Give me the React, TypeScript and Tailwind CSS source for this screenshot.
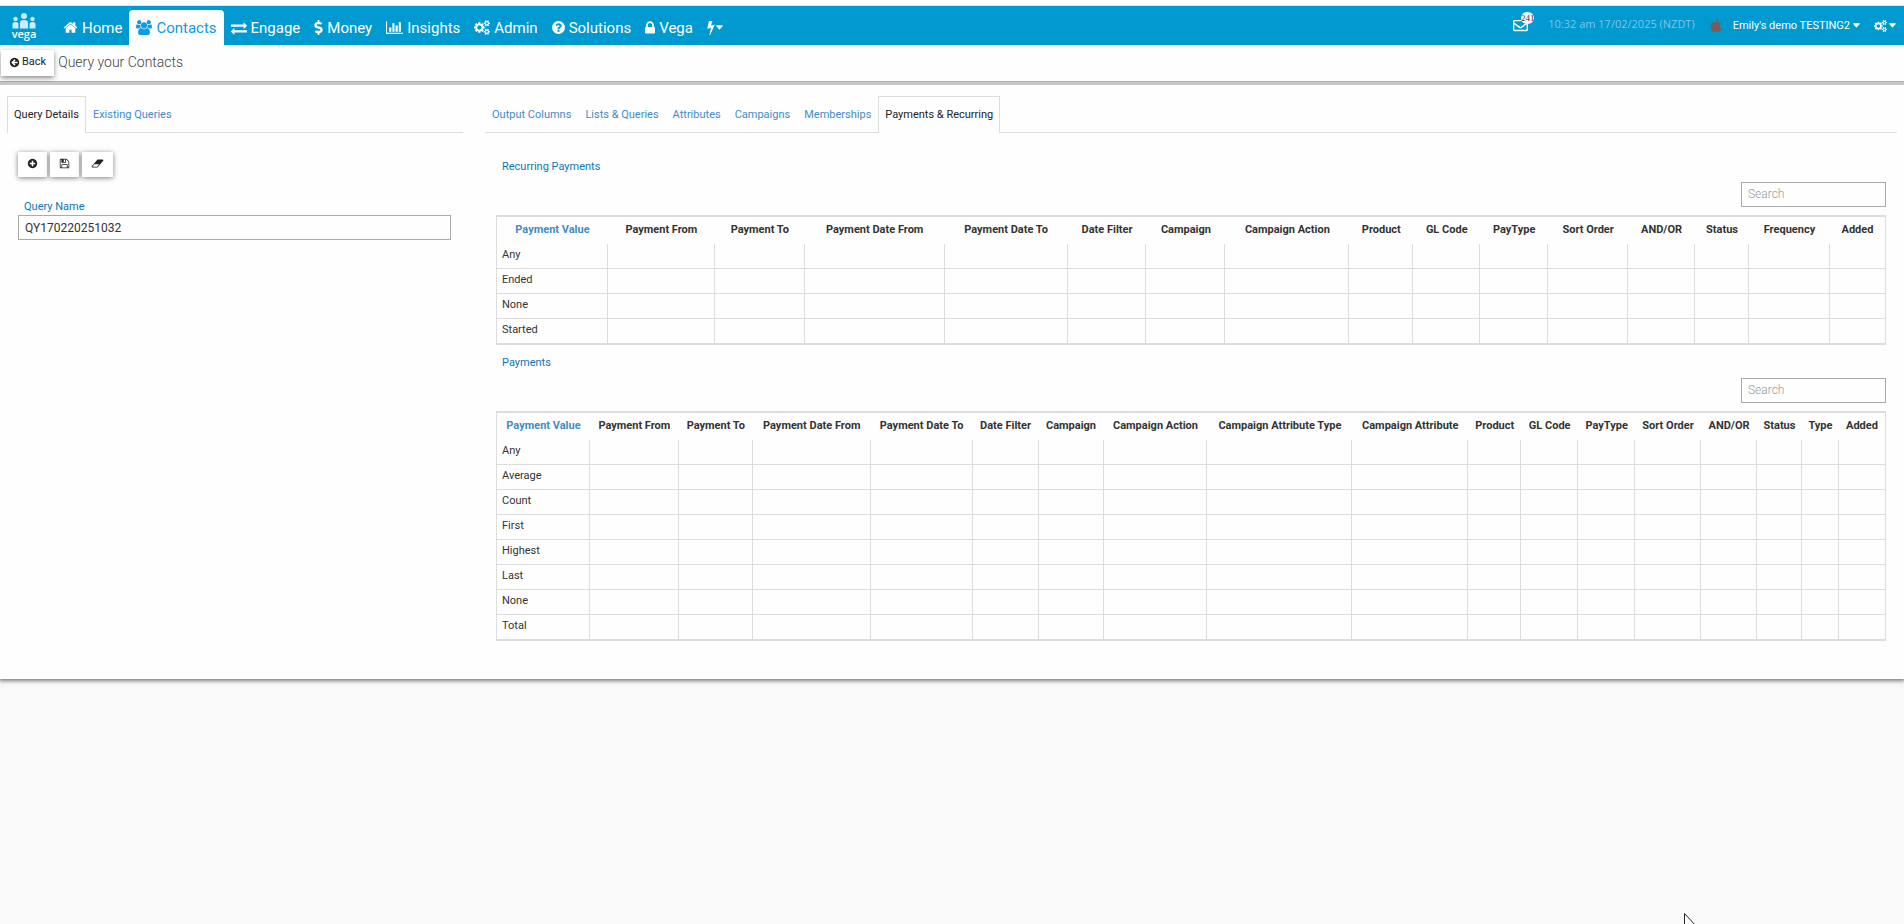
import { useState } from 'react';
import { FaApple, FaDollarSign, FaRegEnvelope } from 'react-icons/fa';

// [viewBox, path]
const ICONS = {
  home: [
    '0 0 1792 1792',
    'M1472 992v480q0 26-19 45t-45 19h-384v-384h-256v384h-384q-26 0-45-19t-19-45v-480q0-1 .5-3t.5-3l575-474 575 474q1 2 1 6zm223-69l-62 74q-8 9-21 11h-3q-13 0-21-7l-692-577-692 577q-12 8-24 7-13-2-21-11l-62-74q-8-10-7-23.500t11-21.500l719-599q32-26 76-26t76 26l244 204v-195q0-14 9-23t23-9h192q14 0 23 9t9 23v408l219 182q10 8 11 21.500t-7 23.500z',
  ],
  users: [
    '64 0 1920 1792',
    'M657 896q-162 5-265 128h-134q-82 0-138-40.500t-56-118.500q0-353 124-353 6 0 43.500 21t97.500 42.500 119 21.500q67 0 133-23-5 37-5 66 0 139 81 256zm1071 637q0 120-73 189.500t-194 69.500h-874q-121 0-194-69.500t-73-189.500q0-53 3.500-103.500t14-109 26.500-108.500 43-97.500 62-81 85.500-53.500 111.500-20q10 0 43 21.500t73 48 107 48 135 21.500 135-21.500 107-48 73-48 43-21.500q61 0 111.500 20t85.500 53.500 62 81 43 97.500 26.500 108.500 14 109 3.500 103.500zm-1024-1277q0 106-75 181t-181 75-181-75-75-181 75-181 181-75 181 75 75 181zm704 384q0 159-112.500 271.500t-271.500 112.500-271.500-112.500-112.500-271.500 112.500-271.500 271.500-112.500 271.500 112.500 112.500 271.500zm576 225q0 78-56 118.500t-138 40.500h-134q-103-123-265-128 81-117 81-256 0-29-5-66 66 23 133 23 59 0 119-21.500t97.500-42.500 43.500-21q124 0 124 353zm-128-609q0 106-75 181t-181 75-181-75-75-181 75-181 181-75 181 75 75 181z',
  ],
  exchange: [
    '0 0 1792 1792',
    'M1792 1184v192q0 13-9.500 22.500t-22.500 9.500h-1376v192q0 13-9.500 22.500t-22.500 9.500q-12 0-24-10l-319-320q-9-9-9-22 0-14 9-23l320-320q9-9 23-9 13 0 22.500 9.500t9.500 22.500v192h1376q13 0 22.500 9.500t9.500 22.500zm0-544q0 14-9 23l-320 320q-9 9-23 9-13 0-22.500-9.500t-9.500-22.500v-192h-1376q-13 0-22.500-9.500t-9.500-22.500v-192q0-13 9.500-22.500t22.500-9.500h1376v-192q0-14 9-23t23-9q12 0 24 10l319 319q9 9 9 23z',
  ],
  chart: [
    '0 0 2048 1792',
    'M640 896v512h-256v-512h256zm384-512v1024h-256v-1024h256zm1024 1152v128h-2048v-1536h128v1408h1920zm-640-896v768h-256v-768h256zm384-384v1152h-256v-1152h256z',
  ],
  cogs: [
    '0 0 1920 1792',
    'M896 896q0-106-75-181t-181-75-181 75-75 181 75 181 181 75 181-75 75-181zm768 512q0-52-38-90t-90-38-90 38-38 90q0 53 37.500 90.500t90.500 37.500 90.500-37.500 37.500-90.500zm0-1024q0-52-38-90t-90-38-90 38-38 90q0 53 37.500 90.500t90.500 37.500 90.500-37.500 37.500-90.500zm-384 421v185q0 10-7 19.500t-16 10.500l-155 24q-11 35-32 76 34 48 90 115 7 11 7 20 0 12-7 19-23 30-82.500 89.500t-78.500 59.500q-11 0-21-7l-115-90q-37 19-77 31-11 108-23 155-7 24-30 24h-186q-11 0-20-7.500t-10-17.500l-23-153q-34-10-75-31l-118 89q-7 7-20 7-11 0-21-8-144-133-144-160 0-9 7-19 10-14 41-53t47-61q-23-44-35-82l-152-24q-10-1-17-9.500t-7-19.500v-185q0-10 7-19.500t16-10.500l155-24q11-35 32-76-34-48-90-115-7-11-7-20 0-12 7-20 22-30 82-89t79-59q11 0 21 7l115 90q34-18 77-32 11-108 23-154 7-24 30-24h186q11 0 20 7.500t10 17.500l23 153q34 10 75 31l118-89q8-7 20-7 11 0 21 8 144 133 144 160 0 8-7 19-12 16-42 54t-45 60q23 48 34 82l152 23q10 2 17 10.500t7 19.500zm640 533v140q0 16-149 31-12 27-30 52 51 113 51 138 0 4-4 7-122 71-124 71-8 0-46-47t-52-68q-20 2-30 2t-30-2q-14 21-52 68t-46 47q-2 0-124-71-4-3-4-7 0-25 51-138-18-25-30-52-149-15-149-31v-140q0-16 149-31 13-29 30-52-51-113-51-138 0-4 4-7 4-2 35-20t59-34 30-16q8 0 46 46.500t52 67.500q20-2 30-2t30 2q51-71 92-112l6-2q4 0 124 70 4 3 4 7 0 25-51 138 17 23 30 52 149 15 149 31zm0-1024v140q0 16-149 31-12 27-30 52 51 113 51 138 0 4-4 7-122 71-124 71-8 0-46-47t-52-68q-20 2-30 2t-30-2q-14 21-52 68t-46 47q-2 0-124-71-4-3-4-7 0-25 51-138-18-25-30-52-149-15-149-31v-140q0-16 149-31 13-29 30-52-51-113-51-138 0-4 4-7 4-2 35-20t59-34 30-16q8 0 46 46.500t52 67.500q20-2 30-2t30 2q51-71 92-112l6-2q4 0 124 70 4 3 4 7 0 25-51 138 17 23 30 52 149 15 149 31z',
  ],
  question: [
    '128 0 1536 1792',
    'M1024 1376v-192q0-14-9-23t-23-9h-192q-14 0-23 9t-9 23v192q0 14 9 23t23 9h192q14 0 23-9t9-23zm256-672q0-88-55.500-163t-138.500-116-170-41q-243 0-371 213-15 24 8 42l132 100q7 6 19 6 16 0 25-12 53-68 86-92 34-24 86-24 48 0 85.500 26t37.500 59q0 38-20 61t-68 45q-63 28-115.500 86.500t-52.500 125.500v36q0 14 9 23t23 9h192q14 0 23-9t9-23q0-19 21.500-49.500t54.500-49.500q32-18 49-28.500t46-35 44.500-48 28-60.500 12.500-81zm384 192q0 209-103 385.500t-279.500 279.500-385.500 103-385.500-103-279.500-279.500-103-385.500 103-385.500 279.500-279.500 385.500-103 385.500 103 279.500 279.500 103 385.500z',
  ],
  lock: [
    '320 0 1152 1792',
    'M640 768h512v-192q0-106-75-181t-181-75-181 75-75 181v192zm832 96v576q0 40-28 68t-68 28h-960q-40 0-68-28t-28-68v-576q0-40 28-68t68-28h32v-192q0-184 132-316t316-132 316 132 132 316v192h32q40 0 68 28t28 68z',
  ],
  bolt: [
    '448 0 896 1792',
    'M1333 566q18 20 7 44l-540 1157q-13 25-42 25-4 0-14-2-17-5-25.500-19t-4.500-30l197-808-406 101q-4 1-12 1-18 0-31-11-18-15-13-39l201-825q4-14 16-23t28-9h328q19 0 32 12.500t13 29.500q0 8-5 18l-171 463 396-98q8-2 12-2 19 0 34 15z',
  ],
  save: [
    '0 0 1792 1792',
    'M512 1536h768v-384h-768v384zm896 0h128v-896q0-14-10-38.500t-20-34.500l-281-281q-10-10-34-20t-39-10v416q0 40-28 68t-68 28h-576q-40 0-68-28t-28-68v-416h-128v1280h128v-416q0-40 28-68t68-28h832q40 0 68 28t28 68v416zm-384-928v-320q0-13-9.500-22.500t-22.500-9.500h-192q-13 0-22.500 9.500t-9.500 22.500v320q0 13 9.500 22.500t22.500 9.500h192q13 0 22.500-9.500t9.500-22.500zm640 32v928q0 40-28 68t-68 28h-1344q-40 0-68-28t-28-68v-1344q0-40 28-68t68-28h928q40 0 88 20t76 48l280 280q28 28 48 76t20 88z',
  ],
  eraser: [
    '0 0 2048 1792',
    'M960 1408l336-384h-768l-336 384h768zm1013-1077q15 34 9.500 71.500t-30.500 65.500l-896 1024q-38 44-96 44h-768q-38 0-69.500-20.500t-47.500-54.500q-15-34-9.500-71.500t30.500-65.500l896-1024q38-44 96-44h768q38 0 69.500 20.500t47.500 54.500z',
  ],
  plus: [
    '0 0 1792 1792',
    'M1344 960v-128q0-26-19-45t-45-19h-256v-256q0-26-19-45t-45-19h-128q-26 0-45 19t-19 45v256h-256q-26 0-45 19t-19 45v128q0 26 19 45t45 19h256v256q0 26 19 45t45 19h128q26 0 45-19t19-45v-256h256q26 0 45-19t19-45zm320-64q0 209-103 385.500t-279.500 279.500-385.500 103-385.500-103-279.500-279.500-103-385.500 103-385.500 279.500-279.500 385.500-103 385.500 103 279.500 279.500 103 385.500z',
  ],
  back: [
    '0 0 1792 1792',
    'M1408 960v-128q0-26-19-45t-45-19h-502l189-189q19-19 19-45t-19-45l-91-91q-18-18-45-18t-45 18l-362 362-91 91q-18 18-18 45t18 45l91 91 362 362q18 18 45 18t45-18l91-91q18-18 18-45t-18-45l-189-189h502q26 0 45-19t19-45zm256-64q0 209-103 385.500t-279.500 279.500-385.500 103-385.500-103-279.500-279.500-103-385.500 103-385.500 279.500-279.500 385.500-103 385.500 103 279.500 279.500 103 385.500z',
  ],
} as const;

type IconName = keyof typeof ICONS;

function Icon({ name, className }: { name: IconName; className: string }) {
  const [viewBox, d] = ICONS[name];
  return (
    <svg viewBox={viewBox} fill="currentColor" className={className} aria-hidden="true">
      <path d={d} />
    </svg>
  );
}

function Caret() {
  return (
    <svg viewBox="0 0 8 5" fill="currentColor" className="w-[7px] h-[5px]" aria-hidden="true">
      <path d="M.5 0h7q.5.3.2.7L4.400 4.600q-.4.4-.8 0L.3.7Q0 .3.500 0z" />
    </svg>
  );
}

function Logo() {
  return (
    <a href="#" className="flex flex-col items-center w-6 ml-3 text-white">
      <svg viewBox="0 0 24 16" className="w-6 h-4" fill="#c9eefb" aria-hidden="true">
        <circle cx="12" cy="3" r="3" />
        <circle cx="3.500" cy="6" r="2.200" />
        <circle cx="20.500" cy="6" r="2.200" />
        <path d="M8 15.500V9.500q0-2.500 4-2.500t4 2.500v6z" />
        <path d="M.5 15.500v-4.500q0-2 3-2t3 2v4.500z" />
        <path d="M17.500 15.500v-4.500q0-2 3-2t3 2v4.500z" />
      </svg>
      <span className="font-['Open_Sans',sans-serif] font-semibold text-[11px] leading-[9px]">vega</span>
    </a>
  );
}

const NAV: { label: string; icon: IconName | 'dollar'; size: string }[] = [
  { label: 'Home', icon: 'home', size: 'w-[15px] h-[15px]' },
  { label: 'Contacts', icon: 'users', size: 'w-4 h-[15px]' },
  { label: 'Engage', icon: 'exchange', size: 'w-4 h-4' },
  { label: 'Money', icon: 'dollar', size: 'w-[9px] h-[15px]' },
  { label: 'Insights', icon: 'chart', size: 'w-[17px] h-[15px]' },
  { label: 'Admin', icon: 'cogs', size: 'w-4 h-[15px]' },
  { label: 'Solutions', icon: 'question', size: 'w-[13px] h-[15px]' },
  { label: 'Vega', icon: 'lock', size: 'w-2.5 h-4' },
];

function NavBar() {
  return (
    <header className="flex h-10 border-t border-[#cfe9f4] bg-[#0099d0] text-white">
      <div className="flex items-center">
        <Logo />
      </div>
      <nav className="flex items-end ml-5">
        {NAV.map(({ label, icon, size }) => (
          <a
            key={label}
            href="#"
            className={
              label === 'Contacts'
                ? 'flex items-center gap-1 h-[35px] px-[7px] rounded-t text-[15px] bg-[#fefefe] text-[#0c9be6]'
                : 'flex items-center gap-1 h-[35px] px-[7px] rounded-t text-[15px]'
            }
          >
            {icon === 'dollar' ? <FaDollarSign className={size} /> : <Icon name={icon} className={size} />}
            {label}
          </a>
        ))}
        <button type="button" aria-label="Quick actions" className="flex items-center gap-px h-[35px] px-[7px]">
          <Icon name="bolt" className="w-2 h-[15px]" />
          <Caret />
        </button>
      </nav>
      <div className="flex items-center ml-auto pr-2 text-[11px]">
        <a href="#" className="relative mr-5" aria-label="Messages">
          <FaRegEnvelope className="w-[15px] h-[15px]" />
          <span className="absolute -top-1.5 left-2 flex items-center justify-center w-[13px] h-3 rounded-full bg-[#f3f3f3] font-['Liberation_Serif',serif] text-[9px] text-[#444]">
            241
          </span>
        </a>
        <span className="mr-3.5 pb-1 font-['Open_Sans',sans-serif] text-[#7cc6ea]">10:32 am 17/02/2025 (NZDT)</span>
        <FaApple className="w-[14px] h-[15px] mr-2.5 text-[#7a5c5a]" />
        <button type="button" className="flex items-center gap-[3px] mr-3.5">
          Emily&apos;s demo TESTING2
          <Caret />
        </button>
        <button type="button" aria-label="Settings" className="flex items-center gap-0.5">
          <Icon name="cogs" className="w-[13px] h-3" />
          <Caret />
        </button>
      </div>
    </header>
  );
}

function Tabs({ tabs, active, onSelect }: { tabs: string[]; active: string; onSelect: (tab: string) => void }) {
  return (
    <div role="tablist" className="flex border-b border-[#ddd]">
      {tabs.map((tab) => (
        <button
          key={tab}
          type="button"
          role="tab"
          aria-selected={tab === active}
          onClick={() => onSelect(tab)}
          className={
            tab === active
              ? 'h-[37px] -mb-px px-1.5 border-x border-t border-[#ddd] bg-[#fefefe] text-[#222]'
              : 'h-[37px] -mb-px px-1.5 border-x border-t border-transparent text-[#428bca]'
          }
        >
          {tab}
        </button>
      ))}
    </div>
  );
}

type Column = [label: string, width: number];

const RECURRING_COLUMNS: Column[] = [
  ['Payment Value', 111],
  ['Payment From', 107],
  ['Payment To', 90],
  ['Payment Date From', 140],
  ['Payment Date To', 123],
  ['Date Filter', 79],
  ['Campaign', 79],
  ['Campaign Action', 124],
  ['Product', 64],
  ['GL Code', 67],
  ['PayType', 68],
  ['Sort Order', 80],
  ['AND/OR', 67],
  ['Status', 54],
  ['Frequency', 81],
  ['Added', 55],
];

const PAYMENT_COLUMNS: Column[] = [
  ['Payment Value', 93],
  ['Payment From', 89],
  ['Payment To', 74],
  ['Payment Date From', 118],
  ['Payment Date To', 102],
  ['Date Filter', 66],
  ['Campaign', 65],
  ['Campaign Action', 104],
  ['Campaign Attribute Type', 145],
  ['Campaign Attribute', 116],
  ['Product', 53],
  ['GL Code', 57],
  ['PayType', 57],
  ['Sort Order', 66],
  ['AND/OR', 56],
  ['Status', 45],
  ['Type', 37],
  ['Added', 46],
];

const RECURRING_ROWS = ['Any', 'Ended', 'None', 'Started'];
const PAYMENT_ROWS = ['Any', 'Average', 'Count', 'First', 'Highest', 'Last', 'None', 'Total'];

function PaymentTable({ title, columns, rows }: { title: string; columns: Column[]; rows: string[] }) {
  const total = columns.reduce((sum, [, width]) => sum + width, 0);

  return (
    <section>
      <h2 className="px-1.5 leading-4 text-[#0b76b8]">{title}</h2>
      <div className="flex justify-end mt-[7px] mb-2">
        <input
          type="search"
          placeholder="Search"
          aria-label={`Search ${title}`}
          className="w-[145px] h-[25px] px-1.5 pb-0.5 border border-[#aaa] text-xs font-light placeholder:text-[#999]"
        />
      </div>
      <table className="w-full table-fixed border-separate border-spacing-0 border-x border-y-2 border-[#ddd]">
        <colgroup>
          {columns.map(([label, width]) => (
            <col key={label} style={{ width: `${(width / total) * 100}%` }} />
          ))}
        </colgroup>
        <thead>
          <tr className="h-[27px]">
            {columns.map(([label], i) => (
              <th
                key={label}
                scope="col"
                className={
                  i === 0
                    ? 'p-0 pb-0.5 font-bold whitespace-nowrap text-[#428bca]'
                    : 'p-0 pb-0.5 font-bold whitespace-nowrap'
                }
              >
                {label}
              </th>
            ))}
          </tr>
        </thead>
        <tbody>
          {rows.map((row) => (
            <tr key={row} className="group h-[25px] last:h-6">
              {columns.map(([label], i) => (
                <td
                  key={label}
                  className="px-[5px] pt-0 pb-0.5 border-b border-r border-[#ddd] last:border-r-0 group-last:border-b-0"
                >
                  {i === 0 ? row : null}
                </td>
              ))}
            </tr>
          ))}
        </tbody>
      </table>
    </section>
  );
}

const TOOLS: { label: string; icon: IconName; button: string; size: string }[] = [
  { label: 'New query', icon: 'plus', button: 'w-[29px]', size: 'w-[11px] h-[11px]' },
  { label: 'Save query', icon: 'save', button: 'w-[29px]', size: 'w-[11px] h-[11px]' },
  { label: 'Clear query', icon: 'eraser', button: 'w-[31px]', size: 'w-[13px] h-[11px]' },
];

export default function App() {
  const [queryTab, setQueryTab] = useState('Query Details');
  const [filterTab, setFilterTab] = useState('Payments & Recurring');
  const [queryName, setQueryName] = useState('QY170220251032');

  return (
    <div className="relative min-h-screen overflow-hidden bg-[#f9f9f9] font-[Roboto,sans-serif] text-[11px] leading-4 text-[#333]">
      <div className="pt-[5px] bg-[#fefefe] shadow-[0_1px_4px_1px_rgba(0,0,0,0.5)]">
        <NavBar />

        <div className="flex items-center h-9 pl-px">
          <button
            type="button"
            className="flex items-center gap-0.5 h-[26px] px-2 pb-0.5 bg-white text-[#222] shadow-[0_2px_5px_rgba(0,0,0,0.45)]"
          >
            <Icon name="back" className="w-[11px] h-[11px]" />
            Back
          </button>
          <h1 className="ml-1 pb-0.5 text-sm font-light text-[#444]">Query your Contacts</h1>
        </div>
        <div className="h-1 border-t border-[#b0b0b0] bg-[#c8c8c8]" />

        <main className="flex pt-[11px] pb-[38px]">
          <div className="w-1/4 pl-[7px] pr-[13px]">
            <Tabs tabs={['Query Details', 'Existing Queries']} active={queryTab} onSelect={setQueryTab} />
            <div className="pt-[19px] pl-[11px] pr-3">
              <div className="flex gap-[3px]">
                {TOOLS.map(({ label, icon, button, size }) => (
                  <button
                    key={label}
                    type="button"
                    aria-label={label}
                    className={`flex items-center justify-center h-[25px] pb-[3px] bg-white text-[#222] shadow-[0_1px_5px_rgba(0,0,0,0.5)] ${button}`}
                  >
                    <Icon name={icon} className={size} />
                  </button>
                ))}
              </div>
              <label htmlFor="query-name" className="block mt-[22px] px-1.5 text-[#0b76b8]">
                Query Name
              </label>
              <input
                id="query-name"
                type="text"
                value={queryName}
                onChange={(e) => setQueryName(e.target.value)}
                className="block w-full h-[25px] px-1.5 border border-[#aaa] text-xs"
              />
            </div>
          </div>

          <div className="flex-1 pl-[9px] pr-[7px]">
            <Tabs
              tabs={[
                'Output Columns',
                'Lists & Queries',
                'Attributes',
                'Campaigns',
                'Memberships',
                'Payments & Recurring',
              ]}
              active={filterTab}
              onSelect={setFilterTab}
            />
            <div className="flex flex-col gap-2.5 pt-[26px] px-[11px]">
              <PaymentTable title="Recurring Payments" columns={RECURRING_COLUMNS} rows={RECURRING_ROWS} />
              <PaymentTable title="Payments" columns={PAYMENT_COLUMNS} rows={PAYMENT_ROWS} />
            </div>
          </div>
        </main>
      </div>

      {/* mouse pointer */}
      <svg
        viewBox="0 0 12 19"
        className="absolute left-[1684px] top-[913px] w-3 h-[19px]"
        fill="#fff"
        stroke="#222"
        aria-hidden="true"
      >
        <path d="M.5.5v16l3.700-3.500 2.500 5.500 2-1-2.500-5.500h5z" />
      </svg>
    </div>
  );
}
